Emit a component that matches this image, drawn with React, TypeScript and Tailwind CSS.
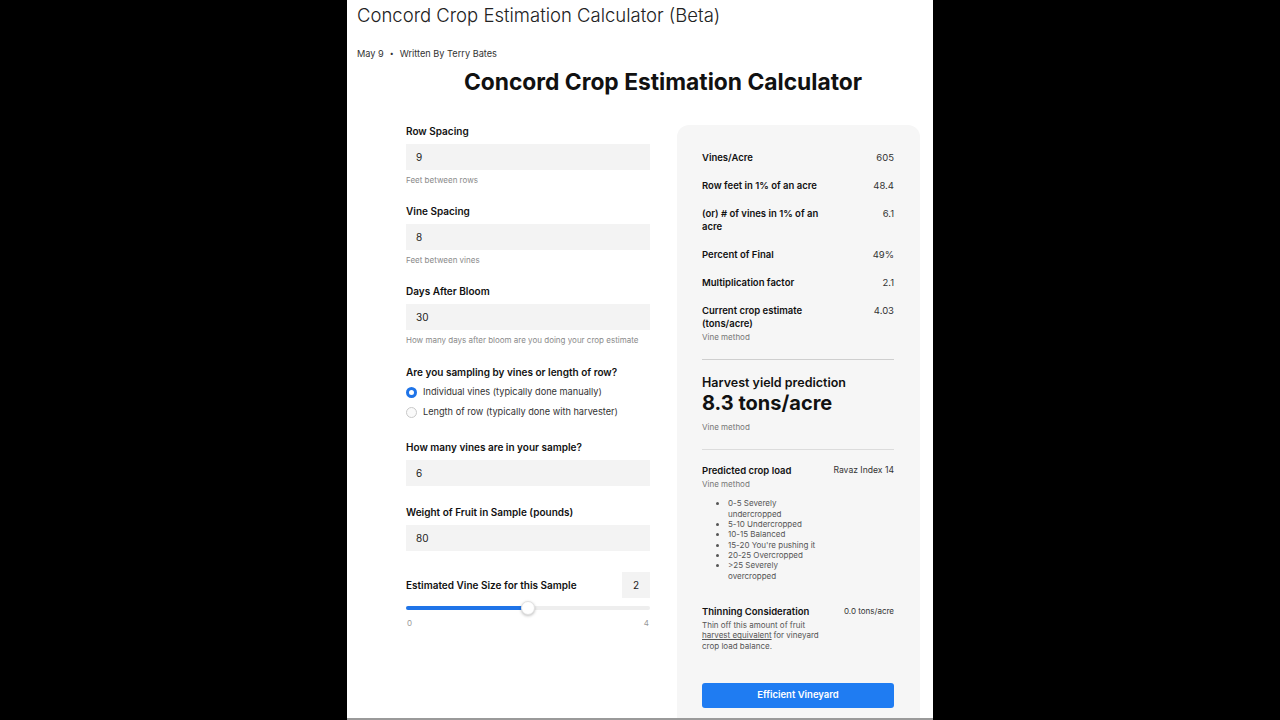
import React from 'react';

const font = { fontFamily: 'Inter, "Noto Sans", sans-serif' };

interface FieldProps {
  label: string;
  value: string;
  helper?: string;
}

const Field: React.FC<FieldProps> = ({ label, value, helper }) => (
  <div className="flex flex-col">
    <div className="h-[14px] text-[10px] leading-[14px] font-semibold text-[#111]">{label}</div>
    <div className="mt-[6px] flex h-[26px] items-center bg-[#f3f3f3] pl-[10px] text-[10px] text-[#222]">
      {value}
    </div>
    {helper && (
      <div className="mt-[4px] h-[12px] text-[8px] leading-[12px] text-[#8a8a8a]">{helper}</div>
    )}
  </div>
);

const Row: React.FC<{ label: string; value: string; sub?: string }> = ({ label, value, sub }) => (
  <div className="flex items-start justify-between">
    <div className="w-[122px]">
      <div className="text-[9.5px] leading-[13px] font-semibold text-[#111]">{label}</div>
      {sub && <div className="mt-[1px] text-[8px] leading-[12px] text-[#777]">{sub}</div>}
    </div>
    <div className="text-[9.5px] leading-[13px] text-[#333]">{value}</div>
  </div>
);

const Radio: React.FC<{ checked?: boolean; label: string }> = ({ checked, label }) => (
  <div className="flex h-[20px] items-center gap-[6px]">
    {checked ? (
      <span className="box-border h-[11px] w-[11px] rounded-full border-[3px] border-[#1f74e8] bg-white" />
    ) : (
      <span className="box-border h-[11px] w-[11px] rounded-full border border-[#c9c9c9] bg-[#fafafa]" />
    )}
    <span className="text-[9.2px] text-[#333]">{label}</span>
  </div>
);

const levels = [
  '0-5 Severely undercropped',
  '5-10 Undercropped',
  '10-15 Balanced',
  "15-20 You're pushing it",
  '20-25 Overcropped',
  '>25 Severely overcropped',
];

export default function App() {
  return (
    <div className="flex min-h-[720px] justify-center bg-black" style={font}>
      <div className="relative flex h-[720px] w-[586px] flex-col overflow-hidden bg-white">
        <div className="pl-[10px] pt-[3px] text-[18.5px] leading-[24px] font-light text-[#222]">
          Concord Crop Estimation Calculator (Beta)
        </div>
        <div className="mt-[20px] flex items-center pl-[10px] text-[9.2px] leading-[14px] text-[#333]">
          <span>May 9</span>
          <span className="mx-[6px] text-[7px]">•</span>
          <span>Written By Terry Bates</span>
        </div>

        <div className="ml-[59px] w-[514px]">
          <h1 className="mt-[7px] text-center text-[22.8px] leading-[28px] font-bold text-[#111]">
            Concord Crop Estimation Calculator
          </h1>

          <div className="flex items-start gap-[27px]">
            {/* inputs */}
            <div className="flex w-[244px] flex-col pt-[28px]">
              <Field label="Row Spacing" value="9" helper="Feet between rows" />
              <div className="mt-[18px]">
                <Field label="Vine Spacing" value="8" helper="Feet between vines" />
              </div>
              <div className="mt-[18px]">
                <Field
                  label="Days After Bloom"
                  value="30"
                  helper="How many days after bloom are you doing your crop estimate"
                />
              </div>
              <div className="mt-[19px] h-[14px] text-[10px] leading-[14px] font-semibold text-[#111]">
                Are you sampling by vines or length of row?
              </div>
              <div className="mt-[3px] flex flex-col">
                <Radio checked label="Individual vines (typically done manually)" />
                <Radio label="Length of row (typically done with harvester)" />
              </div>
              <div className="mt-[18px]">
                <Field label="How many vines are in your sample?" value="6" />
              </div>
              <div className="mt-[19px]">
                <Field label="Weight of Fruit in Sample (pounds)" value="80" />
              </div>
              <div className="mt-[21px] flex h-[26px] items-center justify-between">
                <span className="text-[10px] font-semibold text-[#111]">
                  Estimated Vine Size for this Sample
                </span>
                <span className="flex h-[26px] w-[28px] items-center justify-center bg-[#f3f3f3] text-[10px] text-[#222]">
                  2
                </span>
              </div>
              <div className="relative mt-[3px] h-[14px]">
                <div className="absolute left-0 right-0 top-[5px] h-[4px] rounded-full bg-[#eeeeee]" />
                <div className="absolute left-0 top-[5px] h-[4px] w-[122px] rounded-full bg-[#1f74e8]" />
                <div className="absolute left-[115px] top-0 h-[14px] w-[14px] rounded-full border border-[#e2e2e2] bg-white shadow-[0_1px_3px_rgba(0,0,0,0.25)]" />
              </div>
              <div className="mt-[2px] flex justify-between px-[1px] text-[8px] leading-[12px] text-[#999]">
                <span>0</span>
                <span>4</span>
              </div>
            </div>

            {/* results */}
            <div className="mt-[29px] h-[640px] w-[243px] rounded-xl bg-[#f6f6f6] pl-[25px] pr-[26px] pt-[25.5px]">
              <div className="flex flex-col gap-[15.2px]">
                <Row label="Vines/Acre" value="605" />
                <Row label="Row feet in 1% of an acre" value="48.4" />
                <Row label="(or) # of vines in 1% of an acre" value="6.1" />
                <Row label="Percent of Final" value="49%" />
                <Row label="Multiplication factor" value="2.1" />
                <Row label="Current crop estimate (tons/acre)" value="4.03" sub="Vine method" />
              </div>

              <div className="mt-[16px] h-px bg-[#cfcfcf]" />

              <div className="mt-[15px] text-[12.5px] leading-[16px] font-semibold text-[#111]">
                Harvest yield prediction
              </div>
              <div className="text-[20px] leading-[24px] font-bold text-[#111]">8.3 tons/acre</div>
              <div className="mt-[6px] text-[8px] leading-[12px] text-[#777]">Vine method</div>

              <div className="mt-[16px] h-px bg-[#dcdcdc]" />

              <div className="mt-[14px] flex items-start justify-between">
                <div className="w-[122px]">
                  <div className="text-[9.5px] leading-[13px] font-semibold text-[#111]">
                    Predicted crop load
                  </div>
                  <div className="mt-[1px] text-[8px] leading-[12px] text-[#777]">Vine method</div>
                  <ul className="mt-[8px] list-disc pl-[26px] text-[8px] leading-[10.3px] text-[#555]">
                    {levels.map((l) => (
                      <li key={l} className="pr-[2px]">{l}</li>
                    ))}
                  </ul>
                </div>
                <div className="text-[8.6px] leading-[13px] text-[#333]">Ravaz Index 14</div>
              </div>

              <div className="mt-[24px] flex items-start justify-between">
                <div className="w-[122px]">
                  <div className="text-[9.5px] leading-[13px] font-semibold text-[#111]">
                    Thinning Consideration
                  </div>
                  <div className="mt-[2px] flex flex-col text-[8px] leading-[10.6px] text-[#555]">
                    <div>Thin off this amount of fruit</div>
                    <div className="flex gap-[2px]">
                      <span className="underline">harvest equivalent</span>
                      <span>for vineyard</span>
                    </div>
                    <div>crop load balance.</div>
                  </div>
                </div>
                <div className="text-[8px] leading-[13px] text-[#333]">0.0 tons/acre</div>
              </div>

              <button className="mt-[31px] flex h-[25px] w-full items-center justify-center rounded-[3px] bg-[#1f7cf2] text-[9.5px] font-semibold text-white">
                Efficient Vineyard
              </button>
            </div>
          </div>
        </div>

        <div className="absolute bottom-0 left-0 right-0 h-[2px] bg-[#9a9a9a]" />
      </div>
    </div>
  );
}
